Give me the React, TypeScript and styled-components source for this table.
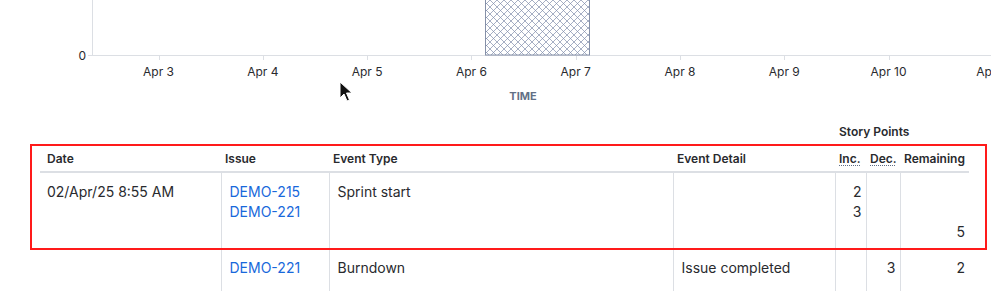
import React from 'react';
import styled, { createGlobalStyle } from 'styled-components';

// Global

const GlobalStyle = createGlobalStyle`
  body {
    margin: 0;
    background: #fff;
    font-family: Inter, "Noto Sans", sans-serif;
    color: #292a2e;
  }
`;

// Styled-components

const Page = styled.div`
  position: relative;
  width: 991px;
  height: 291px;
  overflow: hidden;
`;

const ChartBox = styled.div`
  height: 110px;
`;

const Section = styled.section`
  position: relative;
  padding: 10px 0 0 40px;
`;

const Table = styled.table`
  width: 929px;
  table-layout: fixed;
  border-collapse: collapse;
`;

const HeadCell = styled.th<{ $first?: boolean; $bottom?: boolean }>`
  padding: 4px 4px ${(p) => (p.$bottom ? '4px' : '7px')} ${(p) => (p.$first ? '7px' : '4px')};
  height: 16px;
  font-size: 12px;
  line-height: 16px;
  font-weight: 600;
  text-align: left;
  white-space: nowrap;
  color: #292a2e;
  border-bottom: ${(p) => (p.$bottom ? '2px solid #dcdfe4' : 'none')};
`;

const Abbr = styled.abbr`
  text-decoration: underline dotted #5e6c84;
  text-underline-offset: 2px;
`;

const Cell = styled.td<{ $first?: boolean; $num?: boolean }>`
  padding: ${(p) => (p.$num ? '9px 4px 7px' : '9px 8px 7px')};
  padding-left: ${(p) => (p.$first ? '7px' : undefined)};
  border-left: ${(p) => (p.$first ? 'none' : '1px solid #dcdfe4')};
  vertical-align: top;
  text-align: ${(p) => (p.$num ? 'right' : 'left')};
  font-size: 14px;
  line-height: 20px;
  color: #292a2e;
`;

const Line = styled.div`
  height: 20px;
`;

const IssueLink = styled.a`
  display: block;
  color: #1868db;
  text-decoration: none;
`;

const Highlight = styled.div`
  position: absolute;
  left: 30px;
  top: 34px;
  width: 953px;
  height: 102px;
  border: 2px solid #ff1a1a;
  pointer-events: none;
`;

const Cursor = styled.svg`
  position: absolute;
  left: 339px;
  top: 81px;
`;

// Chart

const ticks = ['Apr 3', 'Apr 4', 'Apr 5', 'Apr 6', 'Apr 7', 'Apr 8', 'Apr 9', 'Apr 10', 'Apr 11'];

const Chart: React.FC = () => (
  <svg width="991" height="110" viewBox="0 0 991 110">
    <defs>
      <pattern id="hatch" width="7" height="7" patternUnits="userSpaceOnUse">
        <path d="M0 0 L7 7 M7 0 L0 7" stroke="#7f8cab" strokeWidth="0.7" />
      </pattern>
    </defs>
    <line x1="92.5" y1="0" x2="92.5" y2="55" stroke="#dcdfe4" />
    <line x1="88" y1="55.5" x2="991" y2="55.5" stroke="#dcdfe4" />
    <rect x="485.5" y="-1" width="104" height="56" fill="url(#hatch)" stroke="#8590a8" />
    <text x="86" y="59.5" fontSize="12" textAnchor="end" fill="#292a2e" fontFamily="Inter">
      0
    </text>
    {ticks.map((t, i) => {
      const x = 158.5 + i * 104.3;
      return (
        <g key={t}>
          <line x1={Math.round(x) + 0.5} y1="56" x2={Math.round(x) + 0.5} y2="60" stroke="#dcdfe4" />
          <text x={x} y="75.5" fontSize="12" textAnchor="middle" fill="#292a2e" fontFamily="Inter">
            {t}
          </text>
        </g>
      );
    })}
    <text x="523" y="100" fontSize="11" fontWeight="700" textAnchor="middle" fill="#626f86" fontFamily="Inter">
      TIME
    </text>
  </svg>
);

// JSX-Component

const App: React.FC = () => {
  return (
    <Page>
      <GlobalStyle />
      <ChartBox>
        <Chart />
      </ChartBox>
      <Section>
        <Table>
          <colgroup>
            <col style={{ width: 181 }} />
            <col style={{ width: 108 }} />
            <col style={{ width: 344 }} />
            <col style={{ width: 162 }} />
            <col style={{ width: 31 }} />
            <col style={{ width: 34 }} />
            <col style={{ width: 69 }} />
          </colgroup>
          <thead>
            <tr>
              <HeadCell colSpan={4} />
              <HeadCell colSpan={3}>Story Points</HeadCell>
            </tr>
            <tr>
              <HeadCell $first $bottom>Date</HeadCell>
              <HeadCell $bottom>Issue</HeadCell>
              <HeadCell $bottom>Event Type</HeadCell>
              <HeadCell $bottom>Event Detail</HeadCell>
              <HeadCell $bottom>
                <Abbr title="Increase">Inc.</Abbr>
              </HeadCell>
              <HeadCell $bottom>
                <Abbr title="Decrease">Dec.</Abbr>
              </HeadCell>
              <HeadCell $bottom>Remaining</HeadCell>
            </tr>
          </thead>
          <tbody>
            <tr>
              <Cell $first>02/Apr/25 8:55 AM</Cell>
              <Cell>
                <IssueLink href="#">DEMO-215</IssueLink>
                <IssueLink href="#">DEMO-221</IssueLink>
              </Cell>
              <Cell>Sprint start</Cell>
              <Cell />
              <Cell $num>
                <Line>2</Line>
                <Line>3</Line>
              </Cell>
              <Cell $num />
              <Cell $num>
                <Line />
                <Line />
                <Line>5</Line>
              </Cell>
            </tr>
            <tr>
              <Cell $first />
              <Cell>
                <IssueLink href="#">DEMO-221</IssueLink>
              </Cell>
              <Cell>Burndown</Cell>
              <Cell>Issue completed</Cell>
              <Cell $num />
              <Cell $num>3</Cell>
              <Cell $num>2</Cell>
            </tr>
            <tr>
              <Cell $first style={{ height: 40 }} />
              <Cell />
              <Cell />
              <Cell />
              <Cell $num />
              <Cell $num />
              <Cell $num />
            </tr>
          </tbody>
        </Table>
        <Highlight />
      </Section>
      <Cursor width="14" height="22" viewBox="0 0 14 22">
        <path d="M1 1 L1 17 L5 13 L8 20 L10.5 19 L7.5 12 L13 12 Z" fill="#111" stroke="#fff" strokeWidth="1" />
      </Cursor>
    </Page>
  );
};

export default App;
